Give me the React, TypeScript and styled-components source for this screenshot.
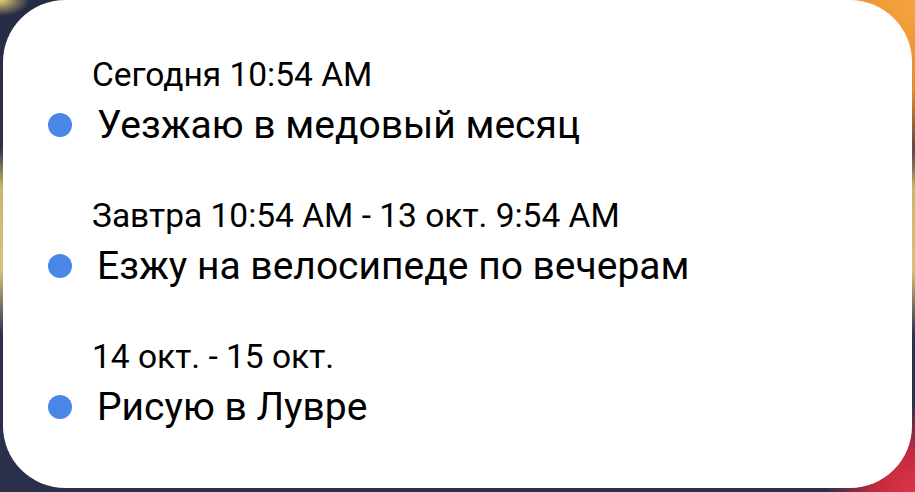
import React from 'react'
import styled, { createGlobalStyle } from 'styled-components'

const GlobalStyle = createGlobalStyle`
  html, body {
    margin: 0;
    padding: 0;
    width: 915px;
    height: 492px;
    overflow: hidden;
  }
  body {
    font-family: Roboto, 'Noto Sans', sans-serif;
  }
`

type Event = {
  when: string
  title: string
}

const events: Event[] = [
  { when: 'Сегодня 10:54 AM', title: 'Уезжаю в медовый месяц' },
  { when: 'Завтра 10:54 AM - 13 окт. 9:54 AM', title: 'Езжу на велосипеде по вечерам' },
  { when: '14 окт. - 15 окт.', title: 'Рисую в Лувре' },
]

const Wallpaper = styled.div`
  width: 915px;
  height: 492px;
  box-sizing: border-box;
  padding: 0 3px 4px 3px;
  background:
    radial-gradient(circle at 100% 100%, #e0344a 0, #c02a3c 40px, transparent 90px),
    radial-gradient(circle at 100% 0%, #f4a640 0, #e98a2c 90px, transparent 170px),
    radial-gradient(ellipse at 0% 0%, #e8d070 0, transparent 30px),
    linear-gradient(180deg, #262a44 0%, #2c3049 30%, #c9b768 38%, #d6c27a 55%, #2c3150 68%, #2a2f4c 100%);
`

const Card = styled.div`
  height: 488px;
  box-sizing: border-box;
  background: #ffffff;
  border-radius: 62px;
  padding: 55px 0 0 45px;
  display: flex;
  flex-direction: column;
  gap: 48px;
`

const Item = styled.div`
  display: flex;
  flex-direction: column;
  gap: 7px;
`

const When = styled.div`
  padding-left: 44px;
  font-size: 33.5px;
  line-height: 40px;
  color: #000000;
  white-space: nowrap;
`

const TitleRow = styled.div`
  display: flex;
  align-items: center;
  gap: 25px;
`

const Dot = styled.span<{ $color: string }>`
  width: 24px;
  height: 24px;
  border-radius: 50%;
  background: ${(p) => p.$color};
  flex: none;
`

const Title = styled.div`
  font-size: 39px;
  line-height: 46px;
  color: #000000;
  white-space: nowrap;
`

export default function App() {
  return (
    <>
      <GlobalStyle />
      <Wallpaper>
        <Card>
          {events.map((e) => (
            <Item key={e.title}>
              <When>{e.when}</When>
              <TitleRow>
                <Dot $color='#4a86e8' />
                <Title>{e.title}</Title>
              </TitleRow>
            </Item>
          ))}
        </Card>
      </Wallpaper>
    </>
  )
}
